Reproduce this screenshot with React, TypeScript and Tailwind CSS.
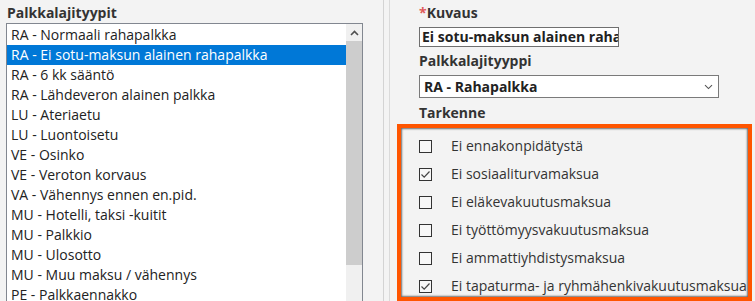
import React from 'react';

const palkkalajit = [
  'RA - Normaali rahapalkka',
  'RA - Ei sotu-maksun alainen rahapalkka',
  'RA - 6 kk sääntö',
  'RA - Lähdeveron alainen palkka',
  'LU - Ateriaetu',
  'LU - Luontoisetu',
  'VE - Osinko',
  'VE - Veroton korvaus',
  'VA - Vähennys ennen en.pid.',
  'MU - Hotelli, taksi -kuitit',
  'MU - Palkkio',
  'MU - Ulosotto',
  'MU - Muu maksu / vähennys',
  'PE - Palkkaennakko',
];

const tarkenteet = [
  { label: 'Ei ennakonpidätystä', checked: false },
  { label: 'Ei sosiaaliturvamaksua', checked: true },
  { label: 'Ei eläkevakuutusmaksua', checked: false },
  { label: 'Ei työttömyysvakuutusmaksua', checked: false },
  { label: 'Ei ammattiyhdistysmaksua', checked: false },
  { label: 'Ei tapaturma- ja ryhmähenkivakuutusmaksua', checked: true },
];

function Checkbox({ checked }: { checked: boolean }) {
  return (
    <span className="w-[13px] h-[13px] border border-[#333] bg-[#f7f7f7] flex items-center justify-center shrink-0">
      {checked && (
        <svg width="11" height="11" viewBox="0 0 11 11">
          <path d="M1.5 5.5 L4.2 8.2 L9.5 2.5" fill="none" stroke="#444" strokeWidth="1.2" />
        </svg>
      )}
    </span>
  );
}

export default function App() {
  return (
    <div
      className="w-[755px] h-[301px] overflow-hidden bg-[#f3f3f3] flex text-[14px] text-[#333]"
      style={{ fontFamily: '"Open Sans", "Noto Sans", sans-serif' }}
    >
      {/* vasen: palkkalajityypit */}
      <div className="pl-[6px] pt-[3px] w-[363px] shrink-0">
        <div className="font-bold leading-[20px] pl-[1px]">Palkkalajityypit</div>
        <div className="mt-0 h-[290px] border border-[#828790] bg-white flex">
          <div className="w-[339px] pt-[1px]">
            {palkkalajit.map((item, i) => (
              <div
                key={item}
                className={
                  'h-[20px] leading-[20px] pl-[4px] whitespace-nowrap ' +
                  (i === 1 ? 'bg-[#0078d7] text-white' : 'text-[#222]')
                }
              >
                {item}
              </div>
            ))}
          </div>
          {/* vierityspalkki */}
          <div className="w-[16px] bg-[#f0f0f0] flex flex-col">
            <div className="h-[17px] flex items-center justify-center">
              <svg width="9" height="6" viewBox="0 0 9 6">
                <path d="M1 5 L4.5 1.5 L8 5" fill="none" stroke="#505050" strokeWidth="1.6" />
              </svg>
            </div>
            <div className="h-[224px] bg-[#cdcdcd]" />
          </div>
        </div>
      </div>

      {/* erottimet */}
      <div className="ml-[20px] w-px bg-[#d3d3d3]" />
      <div className="ml-[5px] w-px bg-[#dadada]" />

      {/* oikea: lomake */}
      <div className="pl-[7px] pt-[3px] flex-1">
        <div className="pl-[22px]">
          <div className="font-bold leading-[20px]">
            <span className="text-[#e05a5a]">*</span>Kuvaus
          </div>
          <div className="mt-[4px] w-[200px] h-[20px] border border-[#6f6f6f] bg-white overflow-hidden">
            <div className="font-bold leading-[18px] pl-[2px] whitespace-nowrap text-[#222]">
              Ei sotu-maksun alainen rahapalkka
            </div>
          </div>
          <div className="mt-[4px] font-bold leading-[20px]">Palkkalajityyppi</div>
          <div className="mt-[4px] w-[300px] h-[23px] border border-[#7a7a7a] bg-white flex items-center justify-between pl-[4px] pr-[5px]">
            <span className="font-bold text-[#222]">RA - Rahapalkka</span>
            <svg width="9" height="6" viewBox="0 0 9 6">
              <path d="M1 1.2 L4.5 4.6 L8 1.2" fill="none" stroke="#555" strokeWidth="1.1" />
            </svg>
          </div>
          <div className="mt-[5px] font-bold leading-[20px]">Tarkenne</div>
        </div>

        <div className="mt-[1px] w-[355px] h-[177px] border-4 border-[#ff5500] shadow-[inset_0_0_2px_1px_rgba(0,0,0,0.55)] pt-[4px] pl-[18px]">
          {tarkenteet.map((t) => (
            <div key={t.label} className="h-[28px] flex items-center gap-[19px]">
              <Checkbox checked={t.checked} />
              <span className="whitespace-nowrap leading-[20px]">{t.label}</span>
            </div>
          ))}
        </div>
      </div>
    </div>
  );
}
